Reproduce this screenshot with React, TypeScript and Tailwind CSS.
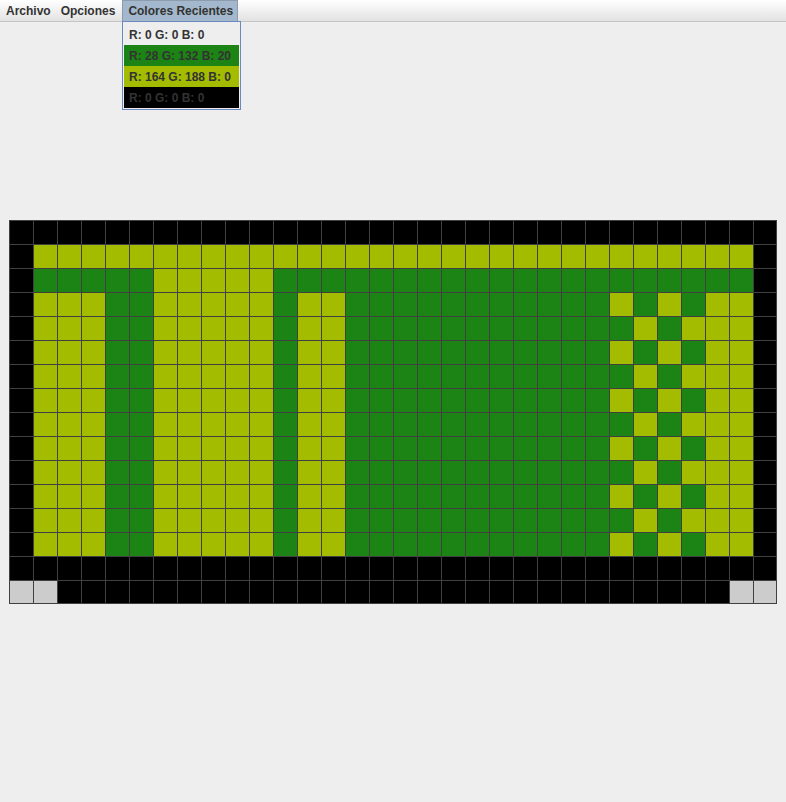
import React from "react";

// K = negro, Y = amarillo, G = verde, S = gris
const colors: Record<string, string> = {
  K: "bg-[#000000]",
  Y: "bg-[#a4bc00]",
  G: "bg-[#1c8414]",
  S: "bg-[#cccccc]",
};

const buildRows = (): string[] => {
  const rows: string[] = [];
  rows.push("K".repeat(32));
  rows.push("K" + "Y".repeat(30) + "K");
  rows.push("K" + "G".repeat(5) + "Y".repeat(5) + "G".repeat(20) + "K");
  for (let r = 3; r <= 13; r++) {
    const checker = r % 2 === 1 ? "YGYG" : "GYGY";
    rows.push("K" + "YYY" + "GG" + "YYYYY" + "G" + "YY" + "G".repeat(11) + checker + "YY" + "K");
  }
  rows.push("K".repeat(32));
  rows.push("SS" + "K".repeat(28) + "SS");
  return rows;
};

const recientes = [
  { label: "R: 0 G: 0 B: 0", bg: "bg-[#eeeeee]" },
  { label: "R: 28 G: 132 B: 20", bg: "bg-[#1c8414]" },
  { label: "R: 164 G: 188 B: 0", bg: "bg-[#a4bc00]" },
  { label: "R: 0 G: 0 B: 0", bg: "bg-[#000000]" },
];

const App: React.FC = () => {
  const rows = buildRows();

  return (
    <div className="h-[802px] w-full bg-[#eeeeee] flex flex-col font-['Liberation_Sans',Arial,sans-serif] text-[12px] font-bold text-[#333333] relative">
      {/* barra de menu */}
      <div className="h-[22px] flex items-stretch border-b border-[#c6c6c6] bg-gradient-to-b from-[#ffffff] to-[#e2e2e2]">
        <div className="px-[6px] flex items-center">Archivo</div>
        <div className="pl-[4px] pr-[7px] flex items-center">Opciones</div>
        <div className="pl-[5px] pr-[4px] flex items-center bg-[#a3b8cc] border border-b-0 border-[#8c9cac]">
          Colores Recientes
        </div>
      </div>

      {/* menu desplegado */}
      <div className="absolute left-[122px] top-[21px] w-[119px] border border-[#6c88c0] bg-[#eeeeee] p-px pt-[2px] z-10">
        {recientes.map((item, index) => (
          <div key={index} className={`h-[21px] pl-[5px] flex items-center ${item.bg}`}>
            {item.label}
          </div>
        ))}
      </div>

      <div className="flex-1 flex items-center justify-center">
        <div className="flex flex-col">
          {rows.map((row, r) => (
            <div key={r} className="flex">
              {row.split("").map((c, i) => (
                <div
                  key={i}
                  className={`w-6 h-6 border-l border-t border-[#404040] ${colors[c]} ${
                    i === 31 ? "border-r" : ""
                  } ${r === 15 ? "border-b" : ""}`}
                />
              ))}
            </div>
          ))}
        </div>
      </div>
    </div>
  );
};

export default App;
